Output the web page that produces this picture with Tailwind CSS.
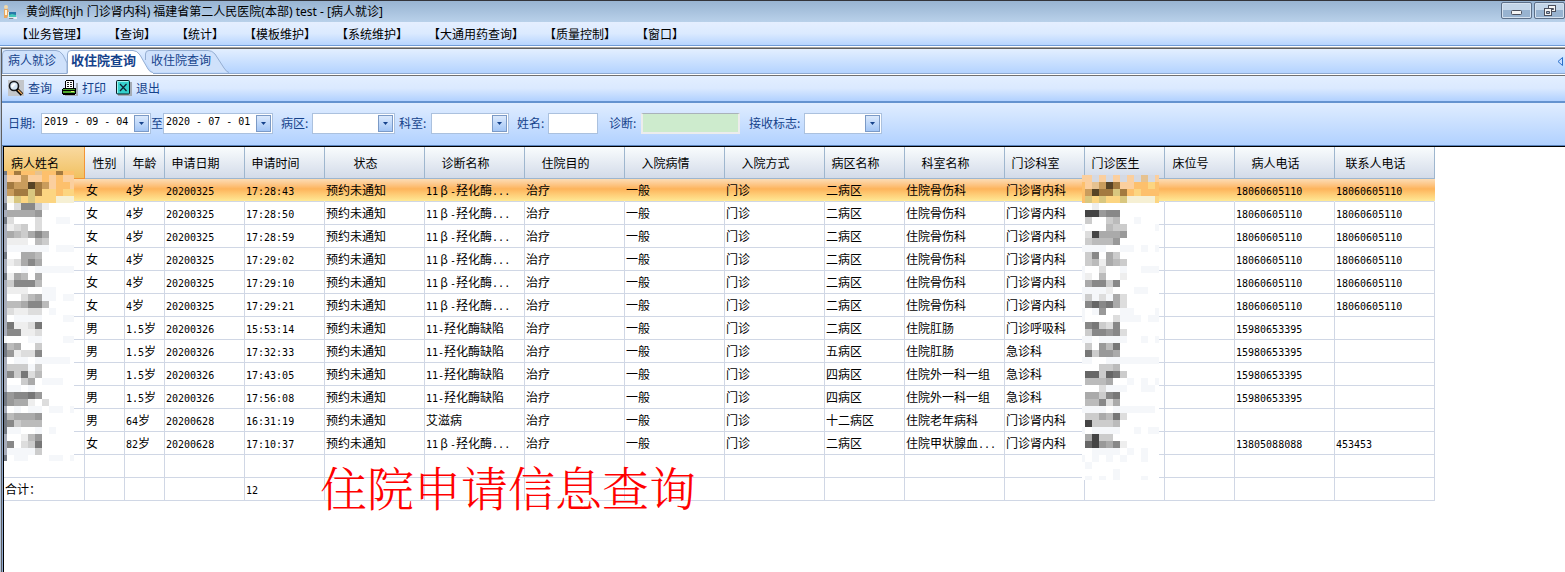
<!DOCTYPE html>
<html lang="zh-CN">
<head>
    <meta charset="UTF-8">
    <meta name="viewport" content="width=device-width, initial-scale=1.0">
    <title>收住院查询</title>
    <script src="https://cdn.jsdelivr.net/npm/@tailwindcss/browser@4"></script>
</head>
<body class="min-h-screen flex flex-col bg-white text-xs text-black font-['Noto_Sans','Noto_Sans_CJK_SC',sans-serif]">
    <!-- Title bar -->
    <header class="h-[22px] shrink-0 flex items-center pl-[3px] border-t border-[#33343a] bg-linear-to-b from-[#98b4d2] to-[#b9d1ea]">
        <svg class="w-4 h-4" viewBox="0 0 16 16">
            <circle cx="3" cy="3" r="2" fill="#f3d9a8"/>
            <path d="M1 5h4l1 4-2 5H1z" fill="#e8a860"/>
            <path d="M2 6h2v5H2z" fill="#fff3dc"/>
            <path d="M5 8h8v6H5z" fill="#dfe8ee"/>
            <path d="M6 8h7v5H6z" fill="#2878a8"/>
            <path d="M6 11l3-1 4 1v2H6z" fill="#45c8b8"/>
            <path d="M11 13h3v2h-3z" fill="#e9edf2"/>
            <path d="M6 14h4v1H6z" fill="#77818c"/>
        </svg>
        <h1 class="ml-[7px] whitespace-nowrap">黄剑辉(hjh 门诊肾内科) 福建省第二人民医院(本部) test - [病人就诊]</h1>
        <div class="ml-auto flex gap-0.5 self-start pt-px">
            <button aria-label="最小化" class="w-[31px] h-[17px] flex justify-center items-center rounded-xs border border-[#5d6f88] bg-linear-to-b from-[#c3d5e8] from-50% to-[#98b3d0] to-50% shadow-[inset_0_0_0_1px_#d5e2f0]">
                <svg class="w-3 h-3" viewBox="0 0 12 12"><rect x=".5" y="5.500" width="10" height="4" rx="1" fill="#f4f4f4" stroke="#4b4f5c"/></svg>
            </button>
            <button aria-label="还原" class="w-[31px] h-[17px] flex justify-center items-center rounded-xs border border-[#5d6f88] bg-linear-to-b from-[#c3d5e8] from-50% to-[#98b3d0] to-50% shadow-[inset_0_0_0_1px_#d5e2f0]">
                <svg class="w-3 h-3" viewBox="0 0 12 12" fill="#f4f4f4" stroke="#4b4f5c"><rect x="4.500" y=".5" width="7" height="6"/><path d="M7.500 3.500h2v1h-2z" fill="#9db6d2"/><rect x=".5" y="3.500" width="7" height="7"/><path d="M2.500 6.500h3v2h-3z" fill="#9db6d2"/></svg>
            </button>
        </div>
    </header>

    <!-- Menu -->
    <nav class="h-6 shrink-0 flex items-center gap-5 pl-4 pt-px whitespace-nowrap border-b border-[#6f9bd6] bg-linear-to-b from-[#e5efff] via-[#dbeaff] to-[#b7d5ff] font-['Noto_Sans_CJK_SC',sans-serif]">
        <a href="#">【业务管理】</a>
        <a href="#">【查询】</a>
        <a href="#">【统计】</a>
        <a href="#">【模板维护】</a>
        <a href="#">【系统维护】</a>
        <a href="#">【大通用药查询】</a>
        <a href="#">【质量控制】</a>
        <a href="#">【窗口】</a>
    </nav>

    <main class="grow flex flex-col mt-px border-l border-t border-l-[#b4c4da] border-t-[#a0a0a0]">
        <div class="grow flex flex-col border-l border-t border-[#5f5f5f] text-[#15428b] font-['Noto_Sans_CJK_SC',sans-serif]">
            <!-- Tabs -->
            <div class="h-[25px] shrink-0 flex items-end border-b border-[#8fa9cf] bg-linear-to-b from-[#e3efff] to-[#b4d3ff]">
                <button class="relative w-[65px] h-[23px] pl-1.5 pb-1 text-left">
                    <svg class="absolute left-0 top-0 w-[65px] h-[23px]" viewBox="0 0 65 23"><path d="M.5 23V4Q.5 .5 4 .5H54Q58 .5 61 5L65 13V23" fill="#cfe1fb" stroke="#95aed2"/></svg>
                    <span class="relative">病人就诊</span>
                </button>
                <button class="relative z-10 w-[78px] h-[23px] pl-1 pb-1 text-left text-[13px] font-bold whitespace-nowrap">
                    <svg class="absolute left-0 top-0 w-[86px] h-6" viewBox="0 0 86 24"><path d="M.5 24V4Q.5 .5 4 .5H66Q70 .5 73 5L81 19Q83 22.500 86 22.500V24z" fill="#fff"/><path d="M.5 23V4Q.5 .5 4 .5H66Q70 .5 73 5L81 19Q83 22.500 86 22.500" fill="none" stroke="#95aed2"/></svg>
                    <span class="relative">收住院查询</span>
                </button>
                <button class="relative w-[84px] h-[23px] pl-1.5 pb-1 text-left whitespace-nowrap">
                    <svg class="absolute left-0 top-0 w-[84px] h-[23px]" viewBox="0 0 84 23"><path d="M.5 10V4Q.5 .5 4 .5H63Q67 .5 70 4L79 18Q82 22.500 84 22.500H7z" fill="#cfe1fb"/><path d="M.5 10V4Q.5 .5 4 .5H63Q67 .5 70 4L79 18Q82 22.500 84 22.500" fill="none" stroke="#95aed2"/></svg>
                    <span class="relative">收住院查询</span>
                </button>
                <button aria-label="向左" class="ml-auto self-center pr-0.5">
                    <svg class="w-[6px] h-[9px]" viewBox="0 0 6 9"><path d="M5.500 .5v8L1 4.500z" fill="#c7ddff" stroke="#2a6fc9"/></svg>
                </button>
            </div>

            <!-- Toolbar -->
            <div class="mt-px h-7 shrink-0 flex items-center gap-2.5 pl-1.5 pb-0.5 border-t border-b-2 border-t-[#707070] border-b-[#6593cf] bg-linear-to-b from-[#e3efff] via-[#dae9ff] to-[#b1d1ff]">
                <button class="flex items-center gap-1">
                    <svg class="w-4 h-4" viewBox="0 0 16 16">
                        <path d="M0 0h16v16H0z" fill="#c3c6ca"/>
                        <circle cx="6" cy="6" r="4.500" fill="#d3e4f2" stroke="#16181c" stroke-width="1.600"/>
                        <path d="M3 6l3-3 2 1-4 4z" fill="#fff"/>
                        <path d="M9 9.500l5 5" stroke="#000" stroke-width="3.600"/>
                        <path d="M10 10l4 4" stroke="#eaa75c" stroke-width="1.500"/>
                    </svg>
                    查询
                </button>
                <button class="flex items-center gap-1">
                    <svg class="w-4 h-4" viewBox="0 0 16 16">
                        <path d="M14 3h2v13H3v-1h11z" fill="#a5acb5"/>
                        <path d="M4 0h8v8h2v6h-1v1H1v-1H0V9h1V8h2V1h1z" fill="#000"/>
                        <path d="M4 1h7v7H4z" fill="#fff"/>
                        <path d="M5 2.500h5M5 4.500h5M5 6.500h5" stroke="#222" stroke-dasharray="2 1"/>
                        <path d="M1 9h12v1H1z" fill="#4ba12c"/>
                        <path d="M1 11h12v2H1z" fill="#4faa2f"/>
                        <path d="M9 11h3v1H9z" fill="#d8f066"/>
                    </svg>
                    打印
                </button>
                <button class="flex items-center gap-1">
                    <svg class="w-4 h-4" viewBox="0 0 16 16">
                        <path d="M2 2h14v14H2z" fill="#a5acb5"/>
                        <rect x=".5" y=".5" width="13" height="13.500" rx="1" fill="#35d0cc" stroke="#0b1c22"/>
                        <path d="M1.500 13V1.500H12" fill="none" stroke="#9ff3ee"/>
                        <path d="M4 4l6.500 7M10.500 4L4 11" stroke="#123" stroke-width="1.200"/>
                    </svg>
                    退出
                </button>
            </div>

            <!-- Filters -->
            <form class="h-[43px] shrink-0 flex items-center pl-1.5 pb-0.5 whitespace-nowrap border-b border-[#5a83bd] bg-linear-to-b from-[#e0edff] to-[#b1d1ff]">
                <label for="dateFrom" class="w-[33px]">日期:</label>
                <div class="w-[110px] h-[21px] flex items-center border border-[#abc1de] bg-white pr-px">
                    <input id="dateFrom" value="2019 - 09 - 04" class="w-full min-w-0 pl-0.5 pb-0.5 text-[10px] text-black outline-none font-['DejaVu_Sans_Mono',monospace]">
                    <button type="button" aria-label="选择日期" class="w-[15px] h-[17px] shrink-0 flex justify-center items-center border border-[#7b9ac6] bg-linear-to-b from-[#dbe9fc] to-[#a3c6f6]"><svg class="w-[5px] h-[3px]" viewBox="0 0 5 3"><path d="M0 0h5L2.500 3z" fill="#15428b"/></svg></button>
                </div>
                <label for="dateTo" class="w-3">至</label>
                <div class="w-[110px] h-[21px] flex items-center border border-[#abc1de] bg-white pr-px mr-2">
                    <input id="dateTo" value="2020 - 07 - 01" class="w-full min-w-0 pl-0.5 pb-0.5 text-[10px] text-black outline-none font-['DejaVu_Sans_Mono',monospace]">
                    <button type="button" aria-label="选择日期" class="w-[15px] h-[17px] shrink-0 flex justify-center items-center border border-[#7b9ac6] bg-linear-to-b from-[#dbe9fc] to-[#a3c6f6]"><svg class="w-[5px] h-[3px]" viewBox="0 0 5 3"><path d="M0 0h5L2.500 3z" fill="#15428b"/></svg></button>
                </div>
                <label for="ward" class="w-[31px]">病区:</label>
                <div class="relative w-[83px] h-[21px] mr-1">
                    <select id="ward" class="appearance-none w-full h-full border border-[#abc1de] bg-white"><option></option></select>
                    <span class="absolute right-0.5 top-0.5 w-[15px] h-[17px] flex justify-center items-center border border-[#7b9ac6] bg-linear-to-b from-[#dbe9fc] to-[#a3c6f6] pointer-events-none"><svg class="w-[5px] h-[3px]" viewBox="0 0 5 3"><path d="M0 0h5L2.500 3z" fill="#15428b"/></svg></span>
                </div>
                <label for="dept" class="w-8">科室:</label>
                <div class="relative w-[78px] h-[21px] mr-2">
                    <select id="dept" class="appearance-none w-full h-full border border-[#abc1de] bg-white"><option></option></select>
                    <span class="absolute right-0.5 top-0.5 w-[15px] h-[17px] flex justify-center items-center border border-[#7b9ac6] bg-linear-to-b from-[#dbe9fc] to-[#a3c6f6] pointer-events-none"><svg class="w-[5px] h-[3px]" viewBox="0 0 5 3"><path d="M0 0h5L2.500 3z" fill="#15428b"/></svg></span>
                </div>
                <label for="patient" class="w-[31px]">姓名:</label>
                <input id="patient" class="w-[50px] h-[21px] border border-[#abc1de] bg-white mr-[11px]">
                <label for="diagnosis" class="w-8">诊断:</label>
                <input id="diagnosis" class="w-[99px] h-[21px] border-2 border-[#ececec] border-t-[#a9b2ba] border-t bg-[#cdebcd] mr-[9px]">
                <label for="flag" class="w-[55px]">接收标志:</label>
                <div class="relative w-[78px] h-[21px]">
                    <select id="flag" class="appearance-none w-full h-full border border-[#abc1de] bg-white"><option></option></select>
                    <span class="absolute right-0.5 top-0.5 w-[15px] h-[17px] flex justify-center items-center border border-[#7b9ac6] bg-linear-to-b from-[#dbe9fc] to-[#a3c6f6] pointer-events-none"><svg class="w-[5px] h-[3px]" viewBox="0 0 5 3"><path d="M0 0h5L2.500 3z" fill="#15428b"/></svg></span>
                </div>
            </form>

            <!-- Result grid -->
            <div class="grow flex border-l border-[#8ea9d3]">
                <div class="relative grow border-l border-t border-black bg-white text-black">
                    <table class="table-fixed w-[1431px] border-separate border-spacing-0 leading-4 whitespace-nowrap">
                        <colgroup>
                            <col class="w-[81px]"><col class="w-10"><col class="w-10"><col class="w-20"><col class="w-20">
                            <col class="w-[100px]"><col class="w-[100px]"><col class="w-[100px]"><col class="w-[100px]"><col class="w-[100px]">
                            <col class="w-20"><col class="w-[100px]"><col class="w-20"><col class="w-20"><col class="w-[70px]">
                            <col class="w-[100px]"><col class="w-[100px]">
                        </colgroup>
                        <thead><tr id="gridHead"></tr></thead>
                        <tbody id="gridBody"></tbody>
                        <tfoot><tr id="gridFoot"></tr></tfoot>
                    </table>
                    <svg id="nameMask" class="absolute left-0 top-6 w-[70px] h-[290px]" viewBox="0 0 70 290" shape-rendering="crispEdges"></svg>
                    <svg id="doctorMask" class="absolute left-[1078px] top-7 w-[77px] h-[305px]" viewBox="0 0 77 305" shape-rendering="crispEdges"></svg>
                    <p class="absolute left-[316px] top-[304px] text-[47px] leading-[70px] text-[#ff0000] whitespace-nowrap font-['Noto_Serif_CJK_SC','Noto_Sans_CJK_SC',sans-serif] font-light">住院申请信息查询</p>
                </div>
            </div>
        </div>
    </main>

    <script>
        const columns = ['病人姓名', '性别', '年龄', '申请日期', '申请时间', '状态', '诊断名称', '住院目的', '入院病情', '入院方式', '病区名称', '科室名称', '门诊科室', '门诊医生', '床位号', '病人电话', '联系人电话'];

        // sex, age, date, time, diagnosis, ward, department, clinic, phone, contact phone
        const patients = [
            ['女', '4岁', '20200325', '17:28:43', '11β-羟化酶...', '二病区', '住院骨伤科', '门诊肾内科', '18060605110', '18060605110'],
            ['女', '4岁', '20200325', '17:28:50', '11β-羟化酶...', '二病区', '住院骨伤科', '门诊肾内科', '18060605110', '18060605110'],
            ['女', '4岁', '20200325', '17:28:59', '11β-羟化酶...', '二病区', '住院骨伤科', '门诊肾内科', '18060605110', '18060605110'],
            ['女', '4岁', '20200325', '17:29:02', '11β-羟化酶...', '二病区', '住院骨伤科', '门诊肾内科', '18060605110', '18060605110'],
            ['女', '4岁', '20200325', '17:29:10', '11β-羟化酶...', '二病区', '住院骨伤科', '门诊肾内科', '18060605110', '18060605110'],
            ['女', '4岁', '20200325', '17:29:21', '11β-羟化酶...', '二病区', '住院骨伤科', '门诊肾内科', '18060605110', '18060605110'],
            ['男', '1.5岁', '20200326', '15:53:14', '11-羟化酶缺陷', '二病区', '住院肛肠', '门诊呼吸科', '15980653395', ''],
            ['男', '1.5岁', '20200326', '17:32:33', '11-羟化酶缺陷', '五病区', '住院肛肠', '急诊科', '15980653395', ''],
            ['男', '1.5岁', '20200326', '17:43:05', '11-羟化酶缺陷', '四病区', '住院外一科一组', '急诊科', '15980653395', ''],
            ['男', '1.5岁', '20200326', '17:56:08', '11-羟化酶缺陷', '四病区', '住院外一科一组', '急诊科', '15980653395', ''],
            ['男', '64岁', '20200628', '16:31:19', '艾滋病', '十二病区', '住院老年病科', '门诊肾内科', '', ''],
            ['女', '82岁', '20200628', '17:10:37', '11β-羟化酶...', '二病区', '住院甲状腺血...', '门诊肾内科', '13805088088', '453453']
        ];

        // Half-width runs go in the mono face, six pixels a character
        function format(text) {
            return text
                .replace(/[\x21-\x7e]+/g, run => `<span class="text-[10px] leading-none font-['DejaVu_Sans_Mono',monospace]">${run}</span>`)
                .replace('β', '<span class="inline-block w-3 text-center">β</span>');
        }

        function cells(values, selected) {
            const cls = selected
                ? 'h-[23px] p-0 pl-px overflow-hidden border-r border-r-transparent border-b border-b-[#d0d7e5] bg-linear-to-b from-[#fcdcb4] from-0% via-[#fdb45b] via-45% to-[#fee995]'
                : 'h-[23px] p-0 pl-px overflow-hidden border-r border-b border-[#d0d7e5]';
            return values.map(value => `<td class="${cls}">${format(value)}</td>`).join('');
        }

        document.getElementById('gridHead').innerHTML = columns.map((name, i) => {
            let cls = 'h-8 p-0 pr-[18px] font-normal border-r border-b border-[#9eb6ce] bg-linear-to-b from-[#f9fcfd] to-[#d3dbe9]';
            if (i === 0) cls = 'h-8 p-0 pr-[18px] font-normal border-r border-b border-[#f29536] bg-linear-to-b from-[#f9d99f] to-[#f1c15f]';
            if (i === 1 || i === 2) cls = 'h-8 p-0 font-normal border-r border-b border-[#9eb6ce] bg-linear-to-b from-[#f9fcfd] to-[#d3dbe9]';
            return `<th class="${cls}">${name}</th>`;
        }).join('');

        const rows = patients.map(([sex, age, date, time, diagnosis, ward, dept, clinic, phone, contact]) =>
            ['', sex, age, date, time, '预约未通知', diagnosis, '治疗', '一般', '门诊', ward, dept, clinic, '', '', phone, contact]);
        rows.push(Array(columns.length).fill(''));
        document.getElementById('gridBody').innerHTML = rows.map((row, i) => `<tr>${cells(row, i === 0)}</tr>`).join('');

        const totals = Array(columns.length).fill('');
        totals[0] = '合计：';
        totals[4] = String(patients.length);
        document.getElementById('gridFoot').innerHTML = cells(totals, false);

        // Masked names: one character per block, hex digits are greys
        const tones = {
            '.': '#ffffff', g: '#f5f7fa', h: '#747a84', i: '#a9aebb', k: '#d5d9e2', o: '#fdc06c', p: '#fbcf9e',
            q: '#a37a40', r: '#574325', s: '#c99c5c', t: '#fcd581', u: '#f6f0d4', v: '#d9c77f', w: '#e6c290'
        };
        const nameBlocks = [
            'hoqoowooqoo', 'ippsppopopp', 'iqssrqspoop', 'isqqvqttott', 'iuvtvtttuuu',
            'h.d88ce....', 'iaaaa9.....', 'hdf..d..gg.', 'iedc.d.....', 'iabca8a....', 'ieee.bc....', 'igggggg.ggg',
            'h..aab.....', 'ieda8a.....', 'iffg.gggggg', 'heab.a.....', 'ic888b.....', 'ieee..gg...', 'if.dbagg.gg',
            'ibba88b....', 'ideedd.g...', 'ifgggg...gg', 'i7eed7.....', 'i88eed.....', 'gff.gg...gg', 'hba..c.....',
            'h9edd8.....', 'ifgg.ggggg.', 'icccgc.....', 'i8c7db.....', 'if.ca.ggg..', 'igg.g......', 'h98879.....',
            'h9aae.d....', 'ifgfgg.gg.g', 'hbaaa9.....', 'h8cbbb.....', 'hgg..g.g...', 'if.eb9.....', 'i8.dc7.....',
            'iggggc.....', 'h.ggf..gg.g'
        ];
        const doctorBlocks = [
            'ppkpkpkpkwkp', 'opwsrqppooto', 'osrqqvqotooo', 'ovtvttvuuuut',
            '..e.........', '.44988......', '.cf.cb..g...', 'g...bcc....g', '.d4aaa9.....', '.cbbb9......', 'gggg..gg.g.g',
            '.c8.ac......', '.cbeabc.....', 'g..d..g..ggg', 'ge.b..e.....', '.a88c8......', 'gggge...gg..', 'gcgdgad.....',
            '.8687ad.....', 'g.g9..gg...g', 'gfff.dggg.gg', '.87cd8......', '.c8898d.....', 'gg.gggg..g.g', '.cf9b7......',
            '.7c99a......', 'ggffgggggggg', '...ccb......', '.66c67c.....', '.bbba..g.g.g', '...dggg..gg.', '.aac87......',
            '.bb8da......', 'ggggfgggggg.', '.ccab7d.....', '.4cccb......', 'g.gggg..g.gg', '.a4cc.......', '.649a8e.....',
            '..gggg.g.g..', 'g.g.g.g..g..', '.g..........', '.....g......', '.g.g.g...g..'
        ];

        function drawBlocks(id, blocks, firstHeight) {
            let y = 0;
            let svg = '';
            blocks.forEach((line, r) => {
                const height = r === 0 ? firstHeight : 7;
                let x = 0;
                [...line].forEach((key, c) => {
                    const width = c === 0 ? 3 : 7;
                    svg += `<rect x="${x}" y="${y}" width="${width}" height="${height}" fill="${tones[key] || '#' + key.repeat(6)}"/>`;
                    x += width;
                });
                y += height;
            });
            document.getElementById(id).innerHTML = svg;
        }

        drawBlocks('nameMask', nameBlocks, 4);
        drawBlocks('doctorMask', doctorBlocks, 7);
    </script>
</body>
</html>
